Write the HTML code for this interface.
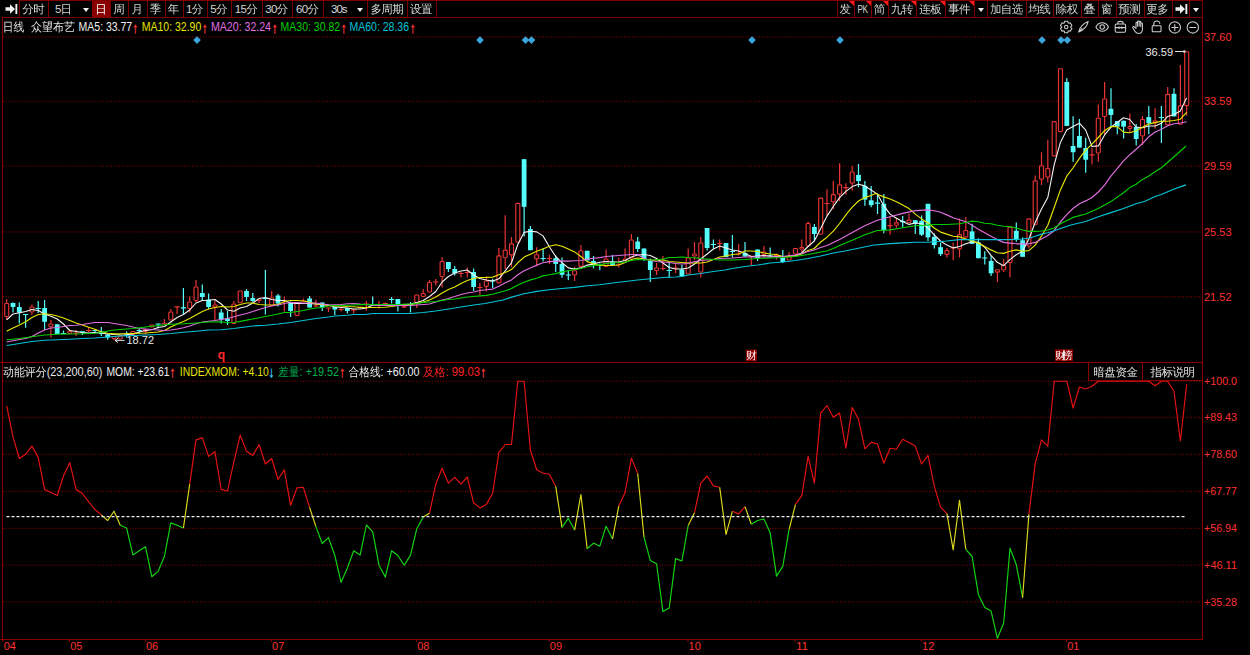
<!DOCTYPE html>
<html lang="zh-CN"><head><meta charset="utf-8"><title>众望布艺 日线</title>
<style>
html,body{margin:0;padding:0;background:#000;}
body{width:1250px;height:655px;overflow:hidden;position:relative;font-family:"Liberation Sans","WenQuanYi Zen Hei","Noto Sans CJK SC",sans-serif;font-size:12px;color:#e6e6e6;}
#tb{position:absolute;left:0;top:0;width:1250px;height:18px;}
.b{position:absolute;top:0;height:18px;line-height:16.6px;box-sizing:border-box;border:1px solid #800000;text-align:center;white-space:nowrap;color:#d6d6d6;overflow:hidden;font-size:11.5px;letter-spacing:-0.6px;padding-right:1.5px}
.b.nb{border-color:transparent}
.b.act{background:#8a0000;color:#fff}
.dd{position:absolute;top:7px;width:0;height:0;border-left:3.5px solid transparent;border-right:3.5px solid transparent;border-top:4px solid #f0f0f0}
.tri{position:absolute;right:0;top:0;width:0;height:0;border-top:5px solid #ff1a1a;border-left:5px solid transparent}
#chart{position:absolute;left:0;top:0}
#chart text{font-family:"Liberation Sans","WenQuanYi Zen Hei","Noto Sans CJK SC",sans-serif;}
.sb{position:absolute;top:362px;height:19px;line-height:19px;box-sizing:border-box;border:1px solid #8c0000;text-align:center;color:#e6e6e6;background:#000;font-size:11.5px;letter-spacing:-0.5px}
</style></head><body>
<svg id="chart" width="1250" height="655" viewBox="0 0 1250 655">
<g shape-rendering="crispEdges">
<rect x="1.8" y="17" width="1.5" height="622" fill="#8c0000"/>
<rect x="1201.8" y="0" width="1.5" height="640" fill="#8c0000"/>
<rect x="2" y="17" width="1200" height="1" fill="#8c0000"/>
<rect x="0" y="362" width="1203" height="1" fill="#8c0000"/>
<rect x="0" y="638.5" width="1203" height="1.2" fill="#8c0000"/>
</g>
<line x1="3" x2="1202" y1="37" y2="37" stroke="#980000" stroke-width="1" stroke-dasharray="1 1.7"/>
<line x1="3" x2="1202" y1="101.3" y2="101.3" stroke="#980000" stroke-width="1" stroke-dasharray="1 1.7"/>
<line x1="3" x2="1202" y1="166.1" y2="166.1" stroke="#980000" stroke-width="1" stroke-dasharray="1 1.7"/>
<line x1="3" x2="1202" y1="231.9" y2="231.9" stroke="#980000" stroke-width="1" stroke-dasharray="1 1.7"/>
<line x1="3" x2="1202" y1="296.9" y2="296.9" stroke="#980000" stroke-width="1" stroke-dasharray="1 1.7"/>
<line x1="3" x2="1202" y1="381.2" y2="381.2" stroke="#980000" stroke-width="1" stroke-dasharray="1 1.7"/>
<line x1="3" x2="1202" y1="417.3" y2="417.3" stroke="#980000" stroke-width="1" stroke-dasharray="1 1.7"/>
<line x1="3" x2="1202" y1="454.3" y2="454.3" stroke="#980000" stroke-width="1" stroke-dasharray="1 1.7"/>
<line x1="3" x2="1202" y1="491.4" y2="491.4" stroke="#980000" stroke-width="1" stroke-dasharray="1 1.7"/>
<line x1="3" x2="1202" y1="528.3" y2="528.3" stroke="#980000" stroke-width="1" stroke-dasharray="1 1.7"/>
<line x1="3" x2="1202" y1="565.2" y2="565.2" stroke="#980000" stroke-width="1" stroke-dasharray="1 1.7"/>
<line x1="3" x2="1202" y1="601.9" y2="601.9" stroke="#980000" stroke-width="1" stroke-dasharray="1 1.7"/>
<g id="candles">
<rect x="4.7" y="303.5" width="4.0" height="13.0" rx="0.9" stroke="#e83434" stroke-width="1.15" fill="#000"/>
<path d="M6.7 299.2V303.0M6.7 317.0V320.0" stroke="#e83434" stroke-width="1.2" fill="none"/>
<path d="M13.0 302.5V312.5" stroke="#54fcfc" stroke-width="1.2" fill="none"/>
<rect x="10.6" y="303.0" width="4.8" height="4.0" fill="#54fcfc"/>
<path d="M19.3 302.5V323.5" stroke="#54fcfc" stroke-width="1.2" fill="none"/>
<rect x="16.9" y="307.0" width="4.8" height="5.5" fill="#54fcfc"/>
<path d="M25.6 314.0V327.8M23.0 314.5H28.2" stroke="#54fcfc" stroke-width="1.2" fill="none"/>
<rect x="29.9" y="307.0" width="4.0" height="5.0" rx="0.9" stroke="#e83434" stroke-width="1.15" fill="#000"/>
<path d="M31.9 304.5V306.5M31.9 312.5V315.0" stroke="#e83434" stroke-width="1.2" fill="none"/>
<path d="M38.2 301.0V313.0M35.6 308.5H40.9" stroke="#54fcfc" stroke-width="1.2" fill="none"/>
<path d="M44.6 300.0V330.0" stroke="#54fcfc" stroke-width="1.2" fill="none"/>
<rect x="42.2" y="308.0" width="4.8" height="13.8" fill="#54fcfc"/>
<rect x="48.9" y="324.0" width="4.0" height="2.7" rx="0.9" stroke="#e83434" stroke-width="1.15" fill="#000"/>
<path d="M50.9 320.0V323.5M50.9 327.2V337.8" stroke="#e83434" stroke-width="1.2" fill="none"/>
<path d="M57.2 324.3V334.0" stroke="#54fcfc" stroke-width="1.2" fill="none"/>
<rect x="54.8" y="324.3" width="4.8" height="9.7" fill="#54fcfc"/>
<path d="M63.5 330.5V334.0M60.9 333.5H66.1" stroke="#54fcfc" stroke-width="1.2" fill="none"/>
<rect x="67.8" y="331.5" width="4.0" height="2.0" rx="0.9" stroke="#e83434" stroke-width="1.15" fill="#000"/>
<path d="M69.8 330.5V331.0" stroke="#e83434" stroke-width="1.2" fill="none"/>
<path d="M76.1 330.0V336.0M73.5 333.2H78.7" stroke="#e83434" stroke-width="1.2" fill="none"/>
<path d="M82.4 331.5V335.0M79.8 331.9H85.0" stroke="#54fcfc" stroke-width="1.2" fill="none"/>
<path d="M88.7 327.0V332.0M86.1 330.5H91.3" stroke="#e83434" stroke-width="1.2" fill="none"/>
<path d="M95.0 329.0V332.0M92.4 330.5H97.6" stroke="#54fcfc" stroke-width="1.2" fill="none"/>
<path d="M101.3 327.0V336.0" stroke="#54fcfc" stroke-width="1.2" fill="none"/>
<rect x="98.9" y="331.5" width="4.8" height="2.5" fill="#54fcfc"/>
<path d="M107.7 334.0V339.8" stroke="#54fcfc" stroke-width="1.2" fill="none"/>
<rect x="105.3" y="334.5" width="4.8" height="3.0" fill="#54fcfc"/>
<rect x="112.0" y="336.5" width="4.0" height="2.0" rx="0.9" stroke="#e83434" stroke-width="1.15" fill="#000"/>
<path d="M114.0 339.0V340.5" stroke="#e83434" stroke-width="1.2" fill="none"/>
<rect x="118.3" y="336.0" width="4.0" height="3.0" rx="0.9" stroke="#e83434" stroke-width="1.15" fill="#000"/>
<path d="M126.6 331.5V337.5M124.0 335.0H129.2" stroke="#54fcfc" stroke-width="1.2" fill="none"/>
<rect x="130.9" y="331.5" width="4.0" height="3.0" rx="0.9" stroke="#e83434" stroke-width="1.15" fill="#000"/>
<path d="M139.2 329.0V333.0M136.6 330.5H141.8" stroke="#54fcfc" stroke-width="1.2" fill="none"/>
<rect x="143.5" y="329.5" width="4.0" height="2.0" rx="0.9" stroke="#e83434" stroke-width="1.15" fill="#000"/>
<path d="M145.5 332.0V334.5" stroke="#e83434" stroke-width="1.2" fill="none"/>
<rect x="149.8" y="325.0" width="4.0" height="2.0" rx="0.9" stroke="#e83434" stroke-width="1.15" fill="#000"/>
<path d="M158.1 323.5V328.5M155.5 324.0H160.7" stroke="#54fcfc" stroke-width="1.2" fill="none"/>
<path d="M164.4 319.0V324.5M161.8 323.8H167.0" stroke="#e83434" stroke-width="1.2" fill="none"/>
<rect x="168.8" y="312.0" width="4.0" height="8.0" rx="0.9" stroke="#e83434" stroke-width="1.15" fill="#000"/>
<path d="M170.8 309.0V311.5" stroke="#e83434" stroke-width="1.2" fill="none"/>
<path d="M177.1 306.0V314.0M174.5 306.8H179.7" stroke="#e83434" stroke-width="1.2" fill="none"/>
<path d="M183.4 288.0V314.0M180.8 307.8H186.0" stroke="#54fcfc" stroke-width="1.2" fill="none"/>
<rect x="187.7" y="302.0" width="4.0" height="6.5" rx="0.9" stroke="#e83434" stroke-width="1.15" fill="#000"/>
<path d="M189.7 296.2V301.5M189.7 309.0V312.5" stroke="#e83434" stroke-width="1.2" fill="none"/>
<rect x="194.0" y="287.0" width="4.0" height="13.5" rx="0.9" stroke="#e83434" stroke-width="1.15" fill="#000"/>
<path d="M196.0 280.0V286.5M196.0 301.0V302.0" stroke="#e83434" stroke-width="1.2" fill="none"/>
<path d="M202.3 284.5V300.5" stroke="#54fcfc" stroke-width="1.2" fill="none"/>
<rect x="199.9" y="293.0" width="4.8" height="4.0" fill="#54fcfc"/>
<path d="M208.6 293.5V309.0" stroke="#54fcfc" stroke-width="1.2" fill="none"/>
<rect x="206.2" y="299.5" width="4.8" height="7.5" fill="#54fcfc"/>
<rect x="212.9" y="305.0" width="4.0" height="2.0" rx="0.9" stroke="#e83434" stroke-width="1.15" fill="#000"/>
<path d="M214.9 300.5V304.5M214.9 307.5V320.5" stroke="#e83434" stroke-width="1.2" fill="none"/>
<path d="M221.2 309.0V323.5" stroke="#54fcfc" stroke-width="1.2" fill="none"/>
<rect x="218.8" y="312.5" width="4.8" height="7.0" fill="#54fcfc"/>
<path d="M227.5 311.0V325.0" stroke="#54fcfc" stroke-width="1.2" fill="none"/>
<rect x="225.1" y="318.5" width="4.8" height="2.5" fill="#54fcfc"/>
<rect x="231.9" y="304.0" width="4.0" height="19.5" rx="0.9" stroke="#e83434" stroke-width="1.15" fill="#000"/>
<path d="M233.9 301.0V303.5" stroke="#e83434" stroke-width="1.2" fill="none"/>
<rect x="238.2" y="291.0" width="4.0" height="11.7" rx="0.9" stroke="#e83434" stroke-width="1.15" fill="#000"/>
<path d="M246.5 289.0V301.0" stroke="#54fcfc" stroke-width="1.2" fill="none"/>
<rect x="244.1" y="291.0" width="4.8" height="6.0" fill="#54fcfc"/>
<path d="M252.8 293.0V302.0" stroke="#54fcfc" stroke-width="1.2" fill="none"/>
<rect x="250.4" y="298.0" width="4.8" height="3.0" fill="#54fcfc"/>
<path d="M259.1 299.5V303.0M256.5 300.2H261.7" stroke="#e83434" stroke-width="1.2" fill="none"/>
<path d="M265.4 270.0V314.5M262.8 298.5H268.0" stroke="#54fcfc" stroke-width="1.2" fill="none"/>
<rect x="269.7" y="298.0" width="4.0" height="7.5" rx="0.9" stroke="#e83434" stroke-width="1.15" fill="#000"/>
<path d="M271.7 291.0V297.5" stroke="#e83434" stroke-width="1.2" fill="none"/>
<path d="M278.0 294.0V306.5" stroke="#54fcfc" stroke-width="1.2" fill="none"/>
<rect x="275.6" y="295.5" width="4.8" height="8.0" fill="#54fcfc"/>
<path d="M284.3 296.5V311.5M281.7 300.5H286.9" stroke="#e83434" stroke-width="1.2" fill="none"/>
<path d="M290.6 301.5V317.0" stroke="#54fcfc" stroke-width="1.2" fill="none"/>
<rect x="288.2" y="302.5" width="4.8" height="8.5" fill="#54fcfc"/>
<rect x="295.0" y="302.5" width="4.0" height="13.0" rx="0.9" stroke="#e83434" stroke-width="1.15" fill="#000"/>
<path d="M303.3 298.5V301.5M300.7 301.0H305.9" stroke="#e83434" stroke-width="1.2" fill="none"/>
<path d="M309.6 296.0V307.5" stroke="#54fcfc" stroke-width="1.2" fill="none"/>
<rect x="307.2" y="298.5" width="4.8" height="9.0" fill="#54fcfc"/>
<path d="M315.9 299.5V307.0M313.3 306.0H318.5" stroke="#e83434" stroke-width="1.2" fill="none"/>
<path d="M322.2 302.5V311.0" stroke="#54fcfc" stroke-width="1.2" fill="none"/>
<rect x="319.8" y="302.5" width="4.8" height="5.0" fill="#54fcfc"/>
<path d="M328.5 307.5V312.0M325.9 308.0H331.1" stroke="#e83434" stroke-width="1.2" fill="none"/>
<path d="M334.8 307.0V315.0" stroke="#54fcfc" stroke-width="1.2" fill="none"/>
<rect x="332.4" y="307.0" width="4.8" height="2.5" fill="#54fcfc"/>
<path d="M341.1 307.5V311.5M338.5 309.5H343.7" stroke="#e83434" stroke-width="1.2" fill="none"/>
<path d="M347.4 308.0V313.5" stroke="#54fcfc" stroke-width="1.2" fill="none"/>
<rect x="345.0" y="308.0" width="4.8" height="3.0" fill="#54fcfc"/>
<path d="M353.7 309.0V313.5M351.1 309.8H356.3" stroke="#e83434" stroke-width="1.2" fill="none"/>
<path d="M360.1 306.5V308.0M357.5 307.2H362.7" stroke="#e83434" stroke-width="1.2" fill="none"/>
<path d="M366.4 301.0V310.5M363.8 304.0H369.0" stroke="#e83434" stroke-width="1.2" fill="none"/>
<path d="M372.7 296.5V306.0M370.1 304.5H375.3" stroke="#54fcfc" stroke-width="1.2" fill="none"/>
<path d="M379.0 301.0V308.5M376.4 305.0H381.6" stroke="#e83434" stroke-width="1.2" fill="none"/>
<path d="M385.3 302.5V304.5M382.7 303.5H387.9" stroke="#e83434" stroke-width="1.2" fill="none"/>
<path d="M391.6 297.0V303.5M389.0 299.5H394.2" stroke="#54fcfc" stroke-width="1.2" fill="none"/>
<path d="M397.9 299.0V311.5" stroke="#54fcfc" stroke-width="1.2" fill="none"/>
<rect x="395.5" y="299.0" width="4.8" height="6.5" fill="#54fcfc"/>
<path d="M404.2 303.5V308.0M401.6 306.8H406.8" stroke="#e83434" stroke-width="1.2" fill="none"/>
<path d="M410.5 302.0V312.5M407.9 304.5H413.1" stroke="#54fcfc" stroke-width="1.2" fill="none"/>
<rect x="414.8" y="295.0" width="4.0" height="7.5" rx="0.9" stroke="#e83434" stroke-width="1.15" fill="#000"/>
<path d="M416.8 303.0V308.0" stroke="#e83434" stroke-width="1.2" fill="none"/>
<rect x="421.2" y="293.5" width="4.0" height="3.0" rx="0.9" stroke="#e83434" stroke-width="1.15" fill="#000"/>
<path d="M423.2 289.0V293.0" stroke="#e83434" stroke-width="1.2" fill="none"/>
<rect x="427.5" y="282.5" width="4.0" height="9.5" rx="0.9" stroke="#e83434" stroke-width="1.15" fill="#000"/>
<path d="M429.5 280.0V282.0" stroke="#e83434" stroke-width="1.2" fill="none"/>
<path d="M435.8 279.0V285.5M433.2 282.0H438.4" stroke="#e83434" stroke-width="1.2" fill="none"/>
<rect x="440.1" y="261.5" width="4.0" height="15.0" rx="0.9" stroke="#e83434" stroke-width="1.15" fill="#000"/>
<path d="M442.1 257.0V261.0M442.1 277.0V287.5" stroke="#e83434" stroke-width="1.2" fill="none"/>
<path d="M448.4 262.0V272.0" stroke="#54fcfc" stroke-width="1.2" fill="none"/>
<rect x="446.0" y="262.0" width="4.8" height="7.0" fill="#54fcfc"/>
<path d="M454.7 266.0V275.5" stroke="#54fcfc" stroke-width="1.2" fill="none"/>
<rect x="452.3" y="269.0" width="4.8" height="4.5" fill="#54fcfc"/>
<path d="M461.0 272.0V277.5M458.4 273.5H463.6" stroke="#e83434" stroke-width="1.2" fill="none"/>
<path d="M467.3 267.5V277.5M464.7 272.5H469.9" stroke="#e83434" stroke-width="1.2" fill="none"/>
<path d="M473.6 268.5V291.0" stroke="#54fcfc" stroke-width="1.2" fill="none"/>
<rect x="471.2" y="272.0" width="4.8" height="15.0" fill="#54fcfc"/>
<path d="M479.9 283.0V295.0M477.3 287.5H482.5" stroke="#e83434" stroke-width="1.2" fill="none"/>
<rect x="484.3" y="281.0" width="4.0" height="5.3" rx="0.9" stroke="#e83434" stroke-width="1.15" fill="#000"/>
<path d="M486.3 276.5V280.5M486.3 286.8V291.4" stroke="#e83434" stroke-width="1.2" fill="none"/>
<path d="M492.6 278.8V288.0M490.0 281.0H495.2" stroke="#54fcfc" stroke-width="1.2" fill="none"/>
<rect x="496.9" y="255.8" width="4.0" height="27.1" rx="0.9" stroke="#e83434" stroke-width="1.15" fill="#000"/>
<path d="M498.9 247.9V255.3" stroke="#e83434" stroke-width="1.2" fill="none"/>
<rect x="503.2" y="250.1" width="4.0" height="7.6" rx="0.9" stroke="#e83434" stroke-width="1.15" fill="#000"/>
<path d="M505.2 215.3V249.6M505.2 258.2V269.0" stroke="#e83434" stroke-width="1.2" fill="none"/>
<rect x="509.5" y="243.8" width="4.0" height="11.0" rx="0.9" stroke="#e83434" stroke-width="1.15" fill="#000"/>
<path d="M511.5 237.0V243.3M511.5 255.3V266.8" stroke="#e83434" stroke-width="1.2" fill="none"/>
<rect x="515.8" y="203.3" width="4.0" height="38.9" rx="0.9" stroke="#e83434" stroke-width="1.15" fill="#000"/>
<path d="M524.1 159.2V236.4" stroke="#54fcfc" stroke-width="1.2" fill="none"/>
<rect x="521.7" y="159.2" width="4.8" height="47.6" fill="#54fcfc"/>
<path d="M530.4 226.1V250.2" stroke="#54fcfc" stroke-width="1.2" fill="none"/>
<rect x="528.0" y="229.0" width="4.8" height="21.2" fill="#54fcfc"/>
<rect x="534.7" y="254.7" width="4.0" height="4.1" rx="0.9" stroke="#e83434" stroke-width="1.15" fill="#000"/>
<path d="M536.7 247.3V254.2M536.7 259.3V266.2" stroke="#e83434" stroke-width="1.2" fill="none"/>
<path d="M543.1 247.9V261.6M540.5 258.5H545.7" stroke="#54fcfc" stroke-width="1.2" fill="none"/>
<path d="M549.4 254.8V263.9M546.8 258.5H552.0" stroke="#e83434" stroke-width="1.2" fill="none"/>
<path d="M555.7 255.3V271.9" stroke="#54fcfc" stroke-width="1.2" fill="none"/>
<rect x="553.3" y="258.2" width="4.8" height="5.7" fill="#54fcfc"/>
<path d="M562.0 257.6V277.7" stroke="#54fcfc" stroke-width="1.2" fill="none"/>
<rect x="559.6" y="263.9" width="4.8" height="10.9" fill="#54fcfc"/>
<path d="M568.3 270.2V279.9M565.7 275.0H570.9" stroke="#54fcfc" stroke-width="1.2" fill="none"/>
<rect x="572.6" y="270.7" width="4.0" height="4.2" rx="0.9" stroke="#e83434" stroke-width="1.15" fill="#000"/>
<path d="M574.6 266.8V270.2M574.6 275.4V281.1" stroke="#e83434" stroke-width="1.2" fill="none"/>
<rect x="578.9" y="250.7" width="4.0" height="15.6" rx="0.9" stroke="#e83434" stroke-width="1.15" fill="#000"/>
<path d="M580.9 245.0V250.2" stroke="#e83434" stroke-width="1.2" fill="none"/>
<path d="M587.2 250.8V260.5" stroke="#54fcfc" stroke-width="1.2" fill="none"/>
<rect x="584.8" y="250.8" width="4.8" height="9.7" fill="#54fcfc"/>
<path d="M593.5 255.9V268.5" stroke="#54fcfc" stroke-width="1.2" fill="none"/>
<rect x="591.1" y="261.0" width="4.8" height="4.0" fill="#54fcfc"/>
<path d="M599.8 263.4V270.2M597.2 265.0H602.4" stroke="#54fcfc" stroke-width="1.2" fill="none"/>
<rect x="604.1" y="259.0" width="4.0" height="7.5" rx="0.9" stroke="#e83434" stroke-width="1.15" fill="#000"/>
<path d="M606.1 249.5V258.5" stroke="#e83434" stroke-width="1.2" fill="none"/>
<path d="M612.5 255.0V265.0" stroke="#54fcfc" stroke-width="1.2" fill="none"/>
<rect x="610.1" y="261.5" width="4.8" height="3.5" fill="#54fcfc"/>
<path d="M618.8 257.5V267.5M616.2 264.5H621.4" stroke="#e83434" stroke-width="1.2" fill="none"/>
<rect x="623.1" y="259.0" width="4.0" height="1.5" rx="0.9" stroke="#e83434" stroke-width="1.15" fill="#000"/>
<path d="M625.1 248.5V258.5" stroke="#e83434" stroke-width="1.2" fill="none"/>
<rect x="629.4" y="240.0" width="4.0" height="18.0" rx="0.9" stroke="#e83434" stroke-width="1.15" fill="#000"/>
<path d="M631.4 234.0V239.5" stroke="#e83434" stroke-width="1.2" fill="none"/>
<path d="M637.7 237.0V252.0" stroke="#54fcfc" stroke-width="1.2" fill="none"/>
<rect x="635.3" y="241.5" width="4.8" height="7.5" fill="#54fcfc"/>
<path d="M644.0 248.5V261.0" stroke="#54fcfc" stroke-width="1.2" fill="none"/>
<rect x="641.6" y="248.5" width="4.8" height="10.5" fill="#54fcfc"/>
<path d="M650.3 258.5V282.0" stroke="#54fcfc" stroke-width="1.2" fill="none"/>
<rect x="647.9" y="260.5" width="4.8" height="9.5" fill="#54fcfc"/>
<rect x="654.6" y="268.0" width="4.0" height="2.5" rx="0.9" stroke="#e83434" stroke-width="1.15" fill="#000"/>
<path d="M656.6 263.0V267.5M656.6 271.0V275.0" stroke="#e83434" stroke-width="1.2" fill="none"/>
<path d="M662.9 256.0V270.5M660.3 268.5H665.5" stroke="#e83434" stroke-width="1.2" fill="none"/>
<path d="M669.2 262.5V278.0M666.6 270.5H671.9" stroke="#54fcfc" stroke-width="1.2" fill="none"/>
<path d="M675.6 263.5V273.0M673.0 268.0H678.2" stroke="#e83434" stroke-width="1.2" fill="none"/>
<path d="M681.9 265.0V276.5" stroke="#54fcfc" stroke-width="1.2" fill="none"/>
<rect x="679.5" y="269.5" width="4.8" height="7.0" fill="#54fcfc"/>
<rect x="686.2" y="258.0" width="4.0" height="16.0" rx="0.9" stroke="#e83434" stroke-width="1.15" fill="#000"/>
<path d="M688.2 248.5V257.5" stroke="#e83434" stroke-width="1.2" fill="none"/>
<rect x="692.5" y="254.0" width="4.0" height="2.0" rx="0.9" stroke="#e83434" stroke-width="1.15" fill="#000"/>
<path d="M694.5 242.0V253.5M694.5 256.5V260.0" stroke="#e83434" stroke-width="1.2" fill="none"/>
<rect x="698.8" y="243.0" width="4.0" height="29.0" rx="0.9" stroke="#e83434" stroke-width="1.15" fill="#000"/>
<path d="M700.8 237.0V242.5M700.8 272.5V277.5" stroke="#e83434" stroke-width="1.2" fill="none"/>
<path d="M707.1 228.0V250.5" stroke="#54fcfc" stroke-width="1.2" fill="none"/>
<rect x="704.7" y="228.0" width="4.8" height="20.0" fill="#54fcfc"/>
<path d="M713.4 239.5V248.5M710.8 244.5H716.0" stroke="#54fcfc" stroke-width="1.2" fill="none"/>
<path d="M719.7 239.5V250.5M717.1 243.5H722.3" stroke="#e83434" stroke-width="1.2" fill="none"/>
<path d="M726.0 243.0V257.0" stroke="#54fcfc" stroke-width="1.2" fill="none"/>
<rect x="723.6" y="243.0" width="4.8" height="14.0" fill="#54fcfc"/>
<path d="M732.4 235.0V257.5M729.8 251.5H735.0" stroke="#54fcfc" stroke-width="1.2" fill="none"/>
<path d="M738.7 244.0V255.5M736.1 254.0H741.3" stroke="#e83434" stroke-width="1.2" fill="none"/>
<path d="M745.0 242.0V256.5" stroke="#54fcfc" stroke-width="1.2" fill="none"/>
<rect x="742.6" y="253.0" width="4.8" height="3.5" fill="#54fcfc"/>
<path d="M751.3 255.5V265.5M748.7 256.5H753.9" stroke="#e83434" stroke-width="1.2" fill="none"/>
<path d="M757.6 249.5V261.0" stroke="#54fcfc" stroke-width="1.2" fill="none"/>
<rect x="755.2" y="249.5" width="4.8" height="8.5" fill="#54fcfc"/>
<rect x="761.9" y="252.0" width="4.0" height="2.5" rx="0.9" stroke="#e83434" stroke-width="1.15" fill="#000"/>
<path d="M763.9 246.0V251.5M763.9 255.0V257.0" stroke="#e83434" stroke-width="1.2" fill="none"/>
<path d="M770.2 247.5V257.5M767.6 256.0H772.8" stroke="#54fcfc" stroke-width="1.2" fill="none"/>
<path d="M776.5 253.5V259.5M773.9 255.5H779.1" stroke="#e83434" stroke-width="1.2" fill="none"/>
<path d="M782.8 250.0V263.0" stroke="#54fcfc" stroke-width="1.2" fill="none"/>
<rect x="780.4" y="258.0" width="4.8" height="4.0" fill="#54fcfc"/>
<rect x="787.1" y="256.0" width="4.0" height="4.0" rx="0.9" stroke="#e83434" stroke-width="1.15" fill="#000"/>
<path d="M789.1 252.0V255.5" stroke="#e83434" stroke-width="1.2" fill="none"/>
<rect x="793.5" y="248.5" width="4.0" height="5.5" rx="0.9" stroke="#e83434" stroke-width="1.15" fill="#000"/>
<rect x="799.8" y="247.5" width="4.0" height="1.5" rx="0.9" stroke="#e83434" stroke-width="1.15" fill="#000"/>
<path d="M801.8 239.5V247.0M801.8 249.5V252.0" stroke="#e83434" stroke-width="1.2" fill="none"/>
<rect x="806.1" y="223.5" width="4.0" height="22.5" rx="0.9" stroke="#e83434" stroke-width="1.15" fill="#000"/>
<path d="M808.1 221.5V223.0" stroke="#e83434" stroke-width="1.2" fill="none"/>
<path d="M814.4 224.0V240.5" stroke="#54fcfc" stroke-width="1.2" fill="none"/>
<rect x="812.0" y="227.0" width="4.8" height="7.0" fill="#54fcfc"/>
<rect x="818.7" y="198.1" width="4.0" height="36.1" rx="0.9" stroke="#e83434" stroke-width="1.15" fill="#000"/>
<path d="M827.0 189.3V215.4M824.4 203.5H829.6" stroke="#e83434" stroke-width="1.2" fill="none"/>
<rect x="831.3" y="194.6" width="4.0" height="7.3" rx="0.9" stroke="#e83434" stroke-width="1.15" fill="#000"/>
<path d="M833.3 181.1V194.1M833.3 202.4V209.3" stroke="#e83434" stroke-width="1.2" fill="none"/>
<rect x="837.6" y="184.8" width="4.0" height="9.3" rx="0.9" stroke="#e83434" stroke-width="1.15" fill="#000"/>
<path d="M839.6 163.2V184.3M839.6 194.6V201.0" stroke="#e83434" stroke-width="1.2" fill="none"/>
<path d="M845.9 183.2V194.8M843.3 187.7H848.5" stroke="#e83434" stroke-width="1.2" fill="none"/>
<rect x="850.2" y="172.0" width="4.0" height="11.1" rx="0.9" stroke="#e83434" stroke-width="1.15" fill="#000"/>
<path d="M852.2 166.0V171.5M852.2 183.6V190.7" stroke="#e83434" stroke-width="1.2" fill="none"/>
<path d="M858.5 163.9V187.3" stroke="#54fcfc" stroke-width="1.2" fill="none"/>
<rect x="856.1" y="174.9" width="4.8" height="6.2" fill="#54fcfc"/>
<path d="M864.9 181.1V205.8" stroke="#54fcfc" stroke-width="1.2" fill="none"/>
<rect x="862.5" y="185.9" width="4.8" height="13.7" fill="#54fcfc"/>
<path d="M871.2 185.9V207.2" stroke="#54fcfc" stroke-width="1.2" fill="none"/>
<rect x="868.8" y="200.3" width="4.8" height="4.8" fill="#54fcfc"/>
<path d="M877.5 193.5V214.1M874.9 203.1H880.1" stroke="#54fcfc" stroke-width="1.2" fill="none"/>
<path d="M883.8 194.1V233.3" stroke="#54fcfc" stroke-width="1.2" fill="none"/>
<rect x="881.4" y="203.8" width="4.8" height="26.7" fill="#54fcfc"/>
<path d="M890.1 216.8V234.7M887.5 225.7H892.7" stroke="#e83434" stroke-width="1.2" fill="none"/>
<rect x="894.4" y="222.8" width="4.0" height="2.4" rx="0.9" stroke="#e83434" stroke-width="1.15" fill="#000"/>
<path d="M896.4 217.5V222.3M896.4 225.7V227.8" stroke="#e83434" stroke-width="1.2" fill="none"/>
<path d="M902.7 216.1V227.8M900.1 221.6H905.3" stroke="#54fcfc" stroke-width="1.2" fill="none"/>
<rect x="907.0" y="220.1" width="4.0" height="2.4" rx="0.9" stroke="#e83434" stroke-width="1.15" fill="#000"/>
<path d="M909.0 213.4V219.6" stroke="#e83434" stroke-width="1.2" fill="none"/>
<path d="M915.3 220.2V234.0" stroke="#54fcfc" stroke-width="1.2" fill="none"/>
<rect x="912.9" y="220.2" width="4.8" height="3.5" fill="#54fcfc"/>
<path d="M921.6 215.4V236.0" stroke="#54fcfc" stroke-width="1.2" fill="none"/>
<rect x="919.2" y="220.9" width="4.8" height="13.8" fill="#54fcfc"/>
<path d="M928.0 203.8V240.9" stroke="#54fcfc" stroke-width="1.2" fill="none"/>
<rect x="925.6" y="203.8" width="4.8" height="33.6" fill="#54fcfc"/>
<path d="M934.3 233.5V248.6" stroke="#54fcfc" stroke-width="1.2" fill="none"/>
<rect x="931.9" y="236.9" width="4.8" height="8.2" fill="#54fcfc"/>
<path d="M940.6 242.4V256.1" stroke="#54fcfc" stroke-width="1.2" fill="none"/>
<rect x="938.2" y="247.2" width="4.8" height="6.9" fill="#54fcfc"/>
<rect x="944.9" y="250.5" width="4.0" height="3.8" rx="0.9" stroke="#e83434" stroke-width="1.15" fill="#000"/>
<path d="M946.9 247.9V250.0M946.9 254.8V257.5" stroke="#e83434" stroke-width="1.2" fill="none"/>
<path d="M953.2 242.4V260.2M950.6 248.0H955.8" stroke="#e83434" stroke-width="1.2" fill="none"/>
<rect x="957.5" y="234.6" width="4.0" height="14.2" rx="0.9" stroke="#e83434" stroke-width="1.15" fill="#000"/>
<path d="M959.5 218.4V234.1M959.5 249.3V257.5" stroke="#e83434" stroke-width="1.2" fill="none"/>
<rect x="963.8" y="230.5" width="4.0" height="6.6" rx="0.9" stroke="#e83434" stroke-width="1.15" fill="#000"/>
<path d="M965.8 217.0V230.0" stroke="#e83434" stroke-width="1.2" fill="none"/>
<path d="M972.1 223.8V243.8" stroke="#54fcfc" stroke-width="1.2" fill="none"/>
<rect x="969.7" y="231.4" width="4.8" height="12.4" fill="#54fcfc"/>
<path d="M978.4 238.3V258.2" stroke="#54fcfc" stroke-width="1.2" fill="none"/>
<rect x="976.0" y="242.4" width="4.8" height="15.8" fill="#54fcfc"/>
<path d="M984.8 251.3V264.4M982.1 258.0H987.4" stroke="#54fcfc" stroke-width="1.2" fill="none"/>
<path d="M991.1 256.1V276.0" stroke="#54fcfc" stroke-width="1.2" fill="none"/>
<rect x="988.7" y="260.9" width="4.8" height="12.4" fill="#54fcfc"/>
<rect x="995.4" y="269.7" width="4.0" height="2.4" rx="0.9" stroke="#e83434" stroke-width="1.15" fill="#000"/>
<path d="M997.4 272.6V282.2" stroke="#e83434" stroke-width="1.2" fill="none"/>
<rect x="1001.7" y="265.5" width="4.0" height="4.5" rx="0.9" stroke="#e83434" stroke-width="1.15" fill="#000"/>
<path d="M1003.7 258.9V265.0M1003.7 270.5V271.9" stroke="#e83434" stroke-width="1.2" fill="none"/>
<rect x="1008.0" y="227.1" width="4.0" height="35.4" rx="0.9" stroke="#e83434" stroke-width="1.15" fill="#000"/>
<path d="M1010.0 263.0V277.4" stroke="#e83434" stroke-width="1.2" fill="none"/>
<path d="M1016.3 222.5V241.7" stroke="#54fcfc" stroke-width="1.2" fill="none"/>
<rect x="1013.9" y="230.7" width="4.8" height="8.9" fill="#54fcfc"/>
<path d="M1022.6 237.6V256.8" stroke="#54fcfc" stroke-width="1.2" fill="none"/>
<rect x="1020.2" y="240.3" width="4.8" height="16.5" fill="#54fcfc"/>
<rect x="1026.9" y="218.8" width="4.0" height="27.2" rx="0.9" stroke="#e83434" stroke-width="1.15" fill="#000"/>
<path d="M1028.9 246.5V248.6" stroke="#e83434" stroke-width="1.2" fill="none"/>
<rect x="1033.2" y="180.8" width="4.0" height="43.9" rx="0.9" stroke="#e83434" stroke-width="1.15" fill="#000"/>
<path d="M1035.2 175.5V180.3" stroke="#e83434" stroke-width="1.2" fill="none"/>
<rect x="1039.5" y="165.7" width="4.0" height="13.4" rx="0.9" stroke="#e83434" stroke-width="1.15" fill="#000"/>
<path d="M1041.5 152.2V165.2M1041.5 179.6V185.1" stroke="#e83434" stroke-width="1.2" fill="none"/>
<rect x="1045.8" y="168.5" width="4.0" height="8.6" rx="0.9" stroke="#e83434" stroke-width="1.15" fill="#000"/>
<path d="M1047.8 139.8V168.0M1047.8 177.6V182.4" stroke="#e83434" stroke-width="1.2" fill="none"/>
<rect x="1052.2" y="121.6" width="4.0" height="34.2" rx="0.9" stroke="#e83434" stroke-width="1.15" fill="#000"/>
<rect x="1058.5" y="68.7" width="4.0" height="62.9" rx="0.9" stroke="#e83434" stroke-width="1.15" fill="#000"/>
<path d="M1066.8 77.9V125.9" stroke="#54fcfc" stroke-width="1.2" fill="none"/>
<rect x="1064.4" y="82.0" width="4.8" height="43.9" fill="#54fcfc"/>
<path d="M1073.1 116.3V161.8" stroke="#54fcfc" stroke-width="1.2" fill="none"/>
<rect x="1070.7" y="146.0" width="4.8" height="6.2" fill="#54fcfc"/>
<path d="M1079.4 119.1V147.6" stroke="#54fcfc" stroke-width="1.2" fill="none"/>
<rect x="1077.0" y="136.0" width="4.8" height="11.6" fill="#54fcfc"/>
<path d="M1085.7 137.7V172.8" stroke="#54fcfc" stroke-width="1.2" fill="none"/>
<rect x="1083.3" y="148.0" width="4.8" height="11.7" fill="#54fcfc"/>
<path d="M1092.0 148.0V164.5M1089.4 154.9H1094.6" stroke="#e83434" stroke-width="1.2" fill="none"/>
<rect x="1096.3" y="118.2" width="4.0" height="34.8" rx="0.9" stroke="#e83434" stroke-width="1.15" fill="#000"/>
<path d="M1098.3 104.6V117.7M1098.3 153.5V161.8" stroke="#e83434" stroke-width="1.2" fill="none"/>
<rect x="1102.6" y="99.0" width="4.0" height="17.5" rx="0.9" stroke="#e83434" stroke-width="1.15" fill="#000"/>
<path d="M1104.6 82.0V98.5M1104.6 117.0V134.2" stroke="#e83434" stroke-width="1.2" fill="none"/>
<path d="M1111.0 88.2V127.3" stroke="#54fcfc" stroke-width="1.2" fill="none"/>
<rect x="1108.5" y="108.8" width="4.8" height="6.2" fill="#54fcfc"/>
<path d="M1117.3 121.1V134.2" stroke="#54fcfc" stroke-width="1.2" fill="none"/>
<rect x="1114.9" y="121.1" width="4.8" height="5.5" fill="#54fcfc"/>
<path d="M1123.6 120.4V138.5" stroke="#54fcfc" stroke-width="1.2" fill="none"/>
<rect x="1121.2" y="120.8" width="4.8" height="5.8" fill="#54fcfc"/>
<rect x="1127.9" y="126.5" width="4.0" height="1.8" rx="0.9" stroke="#e83434" stroke-width="1.15" fill="#000"/>
<path d="M1129.9 113.6V126.0M1129.9 128.8V132.1" stroke="#e83434" stroke-width="1.2" fill="none"/>
<path d="M1136.2 123.9V145.5" stroke="#54fcfc" stroke-width="1.2" fill="none"/>
<rect x="1133.8" y="127.0" width="4.8" height="12.0" fill="#54fcfc"/>
<rect x="1140.5" y="119.5" width="4.0" height="16.5" rx="0.9" stroke="#e83434" stroke-width="1.15" fill="#000"/>
<path d="M1142.5 116.0V119.0M1142.5 136.5V145.0" stroke="#e83434" stroke-width="1.2" fill="none"/>
<path d="M1148.8 106.1V134.2" stroke="#54fcfc" stroke-width="1.2" fill="none"/>
<rect x="1146.4" y="117.1" width="4.8" height="6.2" fill="#54fcfc"/>
<rect x="1153.1" y="120.8" width="4.0" height="2.0" rx="0.9" stroke="#e83434" stroke-width="1.15" fill="#000"/>
<path d="M1155.1 108.2V120.3M1155.1 123.3V128.8" stroke="#e83434" stroke-width="1.2" fill="none"/>
<path d="M1161.4 106.1V143.0M1158.8 117.5H1164.0" stroke="#54fcfc" stroke-width="1.2" fill="none"/>
<rect x="1165.7" y="94.3" width="4.0" height="30.6" rx="0.9" stroke="#e83434" stroke-width="1.15" fill="#000"/>
<path d="M1167.7 86.9V93.8" stroke="#e83434" stroke-width="1.2" fill="none"/>
<path d="M1174.0 88.3V116.4" stroke="#54fcfc" stroke-width="1.2" fill="none"/>
<rect x="1171.6" y="93.8" width="4.8" height="22.6" fill="#54fcfc"/>
<rect x="1178.4" y="105.9" width="4.0" height="18.3" rx="0.9" stroke="#e83434" stroke-width="1.15" fill="#000"/>
<path d="M1180.4 64.9V105.4" stroke="#e83434" stroke-width="1.2" fill="none"/>
<rect x="1184.7" y="51.7" width="4.0" height="53.9" rx="0.9" stroke="#e83434" stroke-width="1.15" fill="#000"/>
<path d="M1186.7 106.1V115.7" stroke="#e83434" stroke-width="1.2" fill="none"/>
</g>
<polyline points="6.7,319.8 13.0,314.0 19.4,312.8 25.7,311.5 32.0,309.5 38.3,310.5 44.6,314.0 50.9,316.2 57.2,319.0 63.5,324.0 69.8,330.5 76.1,331.5 82.4,332.5 88.7,333.0 95.0,332.5 101.5,333.0 107.8,334.0 114.0,334.5 120.3,335.0 126.6,334.8 132.9,334.0 139.2,332.0 145.5,330.5 151.8,329.8 158.1,327.5 164.5,326.5 170.8,322.0 177.1,317.5 183.4,314.5 189.7,310.0 196.0,303.0 202.3,300.5 208.6,300.2 214.9,299.5 221.2,304.0 227.5,310.0 233.9,311.2 240.2,308.0 246.5,306.5 252.8,303.0 259.1,298.5 265.4,297.5 271.7,299.5 278.0,300.5 284.3,300.5 290.6,303.0 297.0,303.5 303.3,303.5 309.6,303.5 315.9,304.0 322.2,304.5 328.5,305.0 334.8,307.0 341.1,307.5 347.4,308.0 353.7,309.0 360.0,309.0 366.4,308.0 372.7,305.0 379.0,305.0 385.3,304.5 391.6,304.5 397.9,304.5 404.2,304.5 410.5,304.0 416.8,302.5 423.2,300.5 429.5,296.5 435.8,291.5 442.1,282.0 448.4,276.5 454.7,273.0 461.0,271.0 467.3,270.0 473.6,275.0 479.9,278.5 486.3,280.0 492.6,281.1 498.9,278.8 505.2,270.8 511.5,262.8 517.8,244.5 524.1,232.4 530.4,231.3 536.7,231.9 543.0,235.9 549.3,246.7 555.7,256.5 562.0,262.8 568.3,267.9 574.6,269.1 580.9,267.9 587.2,265.1 593.5,263.9 599.8,262.2 606.1,261.5 612.5,262.0 618.8,262.0 625.1,260.5 631.4,257.0 637.7,255.0 644.0,254.5 650.3,255.5 656.6,258.5 662.9,263.0 669.2,267.5 675.5,269.0 681.9,269.0 688.2,268.0 694.5,264.0 700.8,259.0 707.1,254.0 713.4,249.0 719.7,246.0 726.0,248.0 732.3,250.0 738.6,251.0 744.9,253.5 751.3,256.5 757.6,256.0 763.9,255.5 770.2,256.0 776.5,256.5 782.8,257.0 789.1,256.0 795.4,255.5 801.7,253.0 808.0,246.5 814.3,241.0 820.7,228.5 827.0,216.1 833.3,206.5 839.6,197.6 845.9,191.4 852.2,186.6 858.5,184.3 864.8,185.9 871.1,190.0 877.4,194.1 883.8,205.8 890.1,214.1 896.4,218.2 902.7,221.6 909.0,224.4 915.3,223.0 921.6,223.7 927.9,227.8 934.2,234.8 940.5,241.0 946.8,245.1 953.2,247.9 959.5,246.5 965.8,243.8 972.1,241.7 978.4,242.4 984.7,247.2 991.0,255.4 997.3,262.3 1003.6,265.7 1009.9,259.6 1016.2,254.8 1022.6,251.3 1028.9,239.0 1035.2,222.5 1041.5,209.0 1047.8,197.5 1054.1,165.2 1060.4,142.4 1066.7,130.1 1073.0,126.6 1079.4,123.2 1085.7,130.1 1092.0,146.5 1098.3,145.9 1104.6,134.9 1110.9,127.3 1117.2,122.5 1123.5,117.7 1129.8,119.5 1136.1,127.0 1142.5,127.7 1148.8,126.0 1155.1,126.0 1161.4,123.3 1167.7,116.4 1174.0,114.4 1180.3,110.9 1186.6,97.9" fill="none" stroke="#f4f4f4" stroke-width="1.1" stroke-linejoin="round"/>
<polyline points="6.7,331.2 13.0,328.0 19.4,325.0 25.7,321.8 32.0,317.5 38.3,314.5 44.6,313.8 50.9,314.5 57.2,316.0 63.5,318.0 69.8,320.5 76.1,323.0 82.4,325.0 88.7,327.2 95.0,329.2 101.5,332.0 107.8,333.2 114.0,333.8 120.3,333.8 132.9,333.5 145.5,333.0 158.1,332.0 164.5,330.5 170.8,327.0 177.1,324.0 183.4,321.5 189.7,318.5 196.0,315.0 202.3,311.5 208.6,309.0 214.9,307.5 221.2,306.5 227.5,307.0 233.9,306.5 240.2,304.5 246.5,303.0 252.8,303.0 259.1,304.5 265.4,305.0 271.7,305.0 278.0,304.5 284.3,301.5 290.6,300.5 297.0,300.5 303.3,301.0 309.6,302.0 315.9,304.0 322.2,304.5 328.5,305.5 334.8,306.0 341.1,306.0 347.4,306.5 353.7,306.8 360.0,307.5 372.7,307.5 385.3,307.2 391.6,306.5 397.9,305.5 404.2,305.0 410.5,304.5 416.8,303.5 423.2,302.0 429.5,300.0 435.8,297.0 442.1,293.0 448.4,289.5 454.7,287.0 461.0,283.5 467.3,280.5 473.6,278.5 479.9,277.5 486.3,277.4 492.6,277.1 498.9,274.8 505.2,272.5 511.5,269.6 517.8,262.8 524.1,257.1 530.4,254.2 536.7,251.3 543.0,249.0 549.3,246.2 555.7,244.7 562.0,246.2 568.3,249.0 574.6,251.9 580.9,256.5 587.2,261.6 593.5,263.9 599.8,265.1 606.1,265.5 612.5,265.5 618.8,265.0 625.1,262.5 631.4,259.5 637.7,258.0 644.0,259.0 650.3,260.0 656.6,260.0 662.9,260.0 669.2,261.5 675.5,262.0 681.9,262.5 688.2,263.0 694.5,263.0 700.8,263.0 707.1,262.0 713.4,259.5 719.7,257.0 726.0,256.0 732.3,254.5 738.6,254.0 744.9,251.0 751.3,251.0 757.6,251.5 763.9,253.0 770.2,254.0 776.5,254.5 782.8,256.5 789.1,256.5 795.4,256.0 801.7,254.0 808.0,250.5 814.3,248.5 820.7,242.0 827.0,237.2 833.3,231.1 839.6,223.5 845.9,214.8 852.2,207.2 858.5,201.0 864.8,197.6 871.1,195.5 875.4,193.5 883.8,196.9 890.1,199.0 896.4,201.7 902.7,205.1 909.0,208.6 915.3,214.1 921.6,218.9 927.9,223.0 934.2,228.0 940.5,232.1 946.8,234.1 953.2,236.2 959.5,236.9 965.8,239.0 972.1,241.0 978.4,243.1 984.7,246.5 991.0,249.9 997.3,252.7 1003.6,253.4 1009.9,251.3 1016.2,249.9 1022.6,251.3 1028.9,250.6 1035.2,245.1 1041.5,236.2 1047.8,225.2 1054.1,207.8 1060.4,189.9 1066.7,176.2 1073.0,168.0 1079.4,158.4 1085.7,150.1 1092.0,144.2 1098.3,137.5 1104.6,130.7 1110.9,126.6 1117.2,126.6 1123.5,132.1 1129.8,132.8 1136.1,130.7 1142.5,127.3 1148.8,124.0 1155.1,122.6 1161.4,121.2 1167.7,121.2 1174.0,120.5 1180.3,119.2 1186.6,112.3" fill="none" stroke="#e6e600" stroke-width="1.15" stroke-linejoin="round"/>
<polyline points="6.7,342.0 13.0,340.8 19.4,339.5 25.7,338.5 32.0,336.5 38.3,333.0 44.6,330.0 50.9,328.0 57.2,327.5 63.5,326.5 69.8,325.5 76.1,325.2 82.4,324.5 88.7,323.5 95.0,322.5 101.5,322.5 107.8,322.5 114.0,323.5 120.3,324.5 126.6,325.5 132.9,327.0 139.2,328.5 145.5,329.0 151.8,329.5 158.1,330.0 164.5,330.5 170.8,330.0 177.1,329.0 183.4,327.8 189.7,326.0 196.0,323.7 202.3,322.0 208.6,321.2 214.9,320.5 221.2,319.5 227.5,318.5 233.9,316.8 240.2,315.0 246.5,313.5 252.8,311.5 259.1,309.5 265.4,307.5 271.7,306.0 278.0,305.0 284.3,303.5 290.6,302.5 297.0,302.5 303.3,303.0 309.6,303.0 315.9,303.0 322.2,304.0 328.5,305.0 334.8,304.8 341.1,304.5 347.4,303.8 353.7,303.5 360.0,304.1 372.7,305.0 385.3,305.5 397.9,305.5 410.5,305.5 416.8,305.0 423.2,304.5 429.5,304.0 435.8,302.0 442.1,300.0 448.4,298.5 454.7,296.5 461.0,294.5 467.3,293.0 473.6,292.0 479.9,290.5 486.3,289.7 492.6,289.1 498.9,286.2 505.2,282.8 511.5,279.9 517.8,274.8 524.1,270.8 530.4,267.9 536.7,265.1 543.0,262.8 549.3,261.6 555.7,261.1 562.0,261.1 568.3,261.1 574.6,260.8 580.9,260.5 587.2,259.3 593.5,258.2 599.8,257.6 606.1,256.5 612.5,256.0 618.8,255.5 625.1,255.0 631.4,254.5 637.7,254.5 644.0,258.5 650.3,260.5 656.6,261.5 662.9,262.0 669.2,262.5 675.5,263.5 681.9,264.0 688.2,263.5 694.5,261.5 700.8,260.5 707.1,260.0 713.4,259.5 719.7,258.5 732.3,258.0 744.9,257.0 757.6,257.0 770.2,257.0 782.8,256.5 795.4,255.0 801.7,253.5 808.0,251.5 814.3,250.0 820.7,247.5 827.0,245.5 833.3,242.5 839.6,239.5 852.2,232.6 864.8,225.7 877.4,220.2 890.1,216.8 902.7,213.4 915.3,210.6 927.9,209.9 934.2,210.8 940.5,212.2 946.8,214.9 953.2,217.7 959.5,219.7 965.8,221.8 972.1,225.2 978.4,229.3 984.7,232.8 991.0,236.2 997.3,239.6 1003.6,242.4 1009.9,243.1 1016.2,243.8 1022.6,243.8 1028.9,243.8 1035.2,242.4 1041.5,239.0 1047.8,235.5 1054.1,230.7 1060.4,222.0 1066.7,214.7 1073.0,208.5 1079.4,203.7 1085.7,200.9 1092.0,197.5 1098.3,192.0 1104.6,185.1 1110.9,176.2 1117.2,168.7 1123.5,160.8 1129.8,154.7 1136.1,149.2 1142.5,143.5 1148.8,136.8 1155.1,132.0 1161.4,129.2 1167.7,125.8 1174.0,123.7 1180.3,123.0 1186.6,121.7" fill="none" stroke="#e070e0" stroke-width="1.15" stroke-linejoin="round"/>
<polyline points="6.7,339.8 19.4,338.5 32.0,336.8 44.6,335.0 57.2,334.2 69.8,334.0 82.4,333.8 95.0,333.2 101.5,332.5 107.8,331.0 114.0,330.0 120.3,329.5 132.9,328.5 145.5,327.0 158.1,325.5 170.8,324.2 183.4,323.8 196.0,323.0 208.6,322.0 221.2,321.8 227.5,322.8 233.9,322.5 240.2,321.4 252.8,319.0 265.4,316.5 278.0,314.0 284.3,312.5 290.6,312.5 297.0,311.5 303.3,310.5 309.6,309.0 315.9,308.0 322.2,307.5 328.5,306.0 334.8,305.5 341.1,305.5 347.4,305.2 353.7,305.0 360.0,304.6 372.7,304.5 385.3,304.5 397.9,304.5 410.5,304.0 416.8,303.5 423.2,302.5 429.5,302.0 435.8,301.5 442.1,300.5 448.4,299.5 454.7,299.0 461.0,298.0 467.3,297.0 473.6,296.5 479.9,295.9 486.3,295.4 492.6,294.3 498.9,292.5 505.2,290.8 511.5,288.5 517.8,285.1 524.1,282.2 530.4,279.9 536.7,278.2 543.0,275.9 549.3,274.8 555.7,273.6 562.0,271.9 568.3,270.8 574.6,269.6 580.9,268.5 587.2,266.8 593.5,265.6 599.8,264.6 606.1,263.5 612.5,263.0 618.8,262.5 625.1,262.0 631.4,260.5 637.7,259.5 644.0,259.8 650.3,260.0 656.6,259.8 662.9,259.0 669.2,257.5 675.5,257.5 681.9,257.0 688.2,257.5 694.5,257.8 700.8,258.5 707.1,259.0 713.4,259.5 719.7,260.0 732.3,260.0 744.9,259.5 757.6,258.5 770.2,258.0 782.8,257.5 795.4,256.5 808.0,254.5 820.7,252.0 827.0,251.0 833.3,248.5 839.6,245.5 852.2,240.2 864.8,234.7 877.4,230.5 890.1,229.9 902.7,227.8 915.3,225.7 927.9,225.1 934.2,224.5 946.8,224.5 959.5,223.8 965.8,222.5 972.1,221.1 978.4,221.8 984.7,223.2 991.0,223.8 997.3,225.2 1003.6,226.3 1009.9,226.6 1016.2,228.0 1022.6,230.0 1028.9,231.4 1035.2,231.4 1041.5,231.0 1047.8,230.0 1054.1,228.0 1060.4,223.8 1073.0,217.4 1085.7,214.0 1098.3,208.5 1110.9,201.6 1123.5,192.7 1129.8,187.6 1136.1,184.3 1142.5,179.4 1148.8,175.9 1155.1,171.8 1161.4,167.7 1167.7,162.2 1174.0,156.7 1180.3,151.2 1186.0,146.0" fill="none" stroke="#00d000" stroke-width="1.15" stroke-linejoin="round"/>
<polyline points="6.7,345.5 19.4,343.5 32.0,341.5 44.6,340.3 57.2,339.8 69.8,339.2 82.4,338.5 95.0,338.0 107.8,337.0 120.3,336.0 132.9,335.5 145.5,335.0 158.1,334.5 170.8,333.5 183.4,332.2 196.0,331.2 208.6,330.0 221.2,329.8 233.9,328.5 245.0,327.0 252.8,326.0 265.4,325.2 278.0,324.0 290.6,322.5 303.3,320.5 315.9,318.5 328.5,317.0 334.8,316.0 347.4,315.2 353.7,314.5 365.0,314.5 372.7,313.5 385.3,313.5 410.5,313.5 423.2,312.5 435.8,311.0 448.4,309.0 461.0,307.0 473.6,305.0 485.0,303.5 503.0,300.0 511.5,297.1 524.1,293.7 536.7,291.4 549.3,289.7 562.0,288.5 574.6,287.4 587.2,285.7 599.8,284.8 612.5,283.0 625.1,281.5 637.7,280.0 650.3,278.8 662.9,277.5 675.5,277.0 681.9,276.5 688.2,275.0 700.8,273.5 713.4,271.5 725.0,270.0 732.3,268.5 744.9,266.5 757.6,265.0 770.2,263.0 782.8,262.0 795.4,260.5 808.0,258.5 820.7,256.0 833.3,253.0 845.0,251.0 874.0,245.0 890.1,243.6 902.7,242.9 915.3,242.2 927.9,242.2 940.0,241.5 946.8,241.0 959.5,239.6 972.1,239.6 984.7,239.6 997.3,239.6 1009.9,239.6 1022.6,239.0 1028.9,238.3 1035.2,236.2 1041.5,234.1 1047.8,232.8 1054.1,230.7 1070.8,225.0 1085.7,221.5 1098.3,216.7 1110.9,212.6 1123.5,208.5 1136.1,203.7 1145.0,201.2 1155.1,196.5 1161.4,194.5 1167.7,191.7 1174.0,189.0 1180.3,186.9 1186.0,184.9" fill="none" stroke="#00c4d8" stroke-width="1.15" stroke-linejoin="round"/>
<text x="1145.5" y="55.5" font-size="11" fill="#e8e8e8" textLength="27.5" lengthAdjust="spacingAndGlyphs">36.59</text>
<path d="M1175 51.5H1185" stroke="#ddd" stroke-width="1"/><circle cx="1184.3" cy="51.5" r="1.3" fill="#ddd"/>
<text x="126.5" y="344.3" font-size="11" fill="#e8e8e8" textLength="27.5" lengthAdjust="spacingAndGlyphs">18.72</text>
<path d="M115 340.4H124.5M115 340.4l3 -2.2M115 340.4l3 2.2" stroke="#ddd" stroke-width="1" fill="none"/>
<path d="M197 36.3l3.8 3.8l-3.8 3.8l-3.8 -3.8z" fill="#3aa6dc"/>
<path d="M480 36.3l3.8 3.8l-3.8 3.8l-3.8 -3.8z" fill="#3aa6dc"/>
<path d="M525.5 36.3l3.8 3.8l-3.8 3.8l-3.8 -3.8z" fill="#3aa6dc"/>
<path d="M531.5 36.3l3.8 3.8l-3.8 3.8l-3.8 -3.8z" fill="#3aa6dc"/>
<path d="M752 36.3l3.8 3.8l-3.8 3.8l-3.8 -3.8z" fill="#3aa6dc"/>
<path d="M840 36.3l3.8 3.8l-3.8 3.8l-3.8 -3.8z" fill="#3aa6dc"/>
<path d="M1042 36.3l3.8 3.8l-3.8 3.8l-3.8 -3.8z" fill="#3aa6dc"/>
<path d="M1061 36.3l3.8 3.8l-3.8 3.8l-3.8 -3.8z" fill="#3aa6dc"/>
<path d="M1067.3 36.3l3.8 3.8l-3.8 3.8l-3.8 -3.8z" fill="#3aa6dc"/>
<polyline points="6.7,405.9 13.0,436.8 19.3,458.5 25.6,454.3 31.9,446.1 38.2,457.4 44.6,489.4 50.9,492.5 57.2,495.6 63.5,476.0 69.8,462.6 76.1,489.4 82.4,493.5 88.7,501.8 95.0,509.5 101.3,514.9" fill="none" stroke="#e81212" stroke-width="1.15" stroke-linejoin="round"/>
<polyline points="101.3,514.9 107.7,520.5 114.0,511.2 120.3,525.2" fill="none" stroke="#dcdc1c" stroke-width="1.15" stroke-linejoin="round"/>
<polyline points="120.3,525.2 126.6,528.1 132.9,554.9 139.2,550.8 145.5,546.8 151.8,576.7 158.1,571.4 164.4,556.5 170.8,522.9 177.1,525.2 183.4,528.1" fill="none" stroke="#12d812" stroke-width="1.15" stroke-linejoin="round"/>
<polyline points="183.4,528.1 189.7,484.2" fill="none" stroke="#dcdc1c" stroke-width="1.15" stroke-linejoin="round"/>
<polyline points="189.7,484.2 196.0,439.9 202.3,437.9 208.6,456.4 214.9,451.7 221.2,489.4 227.5,491.0 233.9,461.6 240.2,435.2 246.5,451.3 252.8,455.4 259.1,444.7 265.4,464.0 271.7,458.5 278.0,479.5 284.3,469.8 290.6,505.3 297.0,487.9 303.3,487.3 309.6,507.5" fill="none" stroke="#e81212" stroke-width="1.15" stroke-linejoin="round"/>
<polyline points="309.6,507.5 315.9,526.6" fill="none" stroke="#dcdc1c" stroke-width="1.15" stroke-linejoin="round"/>
<polyline points="315.9,526.6 322.2,543.5 328.5,537.6 334.8,555.5 341.1,582.3 347.4,567.9 353.7,550.8 360.1,555.1 366.4,525.0 372.7,531.8 379.0,565.2 385.3,577.1 391.6,550.8 397.9,555.5 404.2,565.2 410.5,555.1 416.8,528.7 423.2,517.0" fill="none" stroke="#12d812" stroke-width="1.15" stroke-linejoin="round"/>
<polyline points="423.2,517.0 429.5,513.2" fill="none" stroke="#dcdc1c" stroke-width="1.15" stroke-linejoin="round"/>
<polyline points="429.5,513.2 435.8,484.2 442.1,468.2 448.4,483.2 454.7,477.4 461.0,484.2 467.3,477.0 473.6,502.8 479.9,507.9 486.3,504.4 492.6,493.5 498.9,452.3 505.2,444.5 511.5,444.5 517.8,381.2 524.1,381.2 530.4,450.2 536.7,469.8 543.1,473.3 549.4,474.3 555.7,486.3" fill="none" stroke="#e81212" stroke-width="1.15" stroke-linejoin="round"/>
<polyline points="555.7,486.3 562.0,527.3" fill="none" stroke="#dcdc1c" stroke-width="1.15" stroke-linejoin="round"/>
<polyline points="562.0,527.3 568.3,518.4 574.6,530.1" fill="none" stroke="#12d812" stroke-width="1.15" stroke-linejoin="round"/>
<polyline points="574.6,530.1 580.9,494.5 587.2,548.7" fill="none" stroke="#dcdc1c" stroke-width="1.15" stroke-linejoin="round"/>
<polyline points="587.2,548.7 593.5,543.1 599.8,546.2 606.1,526.2 612.5,539.0" fill="none" stroke="#12d812" stroke-width="1.15" stroke-linejoin="round"/>
<polyline points="612.5,539.0 618.8,506.0" fill="none" stroke="#dcdc1c" stroke-width="1.15" stroke-linejoin="round"/>
<polyline points="618.8,506.0 625.1,492.5 631.4,458.1 637.7,473.5" fill="none" stroke="#e81212" stroke-width="1.15" stroke-linejoin="round"/>
<polyline points="637.7,473.5 644.0,537.0" fill="none" stroke="#dcdc1c" stroke-width="1.15" stroke-linejoin="round"/>
<polyline points="644.0,537.0 650.3,560.6 656.6,563.7 662.9,611.6 669.2,608.0 675.6,558.6 681.9,561.0 688.2,525.6" fill="none" stroke="#12d812" stroke-width="1.15" stroke-linejoin="round"/>
<polyline points="688.2,525.6 694.5,512.8" fill="none" stroke="#dcdc1c" stroke-width="1.15" stroke-linejoin="round"/>
<polyline points="694.5,512.8 700.8,483.2 707.1,476.0 713.4,485.9 719.7,487.3" fill="none" stroke="#e81212" stroke-width="1.15" stroke-linejoin="round"/>
<polyline points="719.7,487.3 726.0,534.5 732.4,511.2" fill="none" stroke="#dcdc1c" stroke-width="1.15" stroke-linejoin="round"/>
<polyline points="732.4,511.2 738.7,513.9 745.0,506.6" fill="none" stroke="#e81212" stroke-width="1.15" stroke-linejoin="round"/>
<polyline points="745.0,506.6 751.3,524.2" fill="none" stroke="#dcdc1c" stroke-width="1.15" stroke-linejoin="round"/>
<polyline points="751.3,524.2 757.6,520.5 763.9,519.0 770.2,532.8 776.5,576.1 782.8,566.4 789.1,529.3" fill="none" stroke="#12d812" stroke-width="1.15" stroke-linejoin="round"/>
<polyline points="789.1,529.3 795.5,504.4" fill="none" stroke="#dcdc1c" stroke-width="1.15" stroke-linejoin="round"/>
<polyline points="795.5,504.4 801.8,495.6 808.1,456.4 814.4,483.2 820.7,413.1 827.0,405.5 833.3,417.3 839.6,413.1 845.9,448.2 852.2,407.4 858.5,419.3 864.9,448.8 871.2,442.4 877.5,444.0 883.8,463.2 890.1,448.2 896.4,449.2 902.7,439.3 909.0,442.6 915.3,446.1 921.6,464.0 928.0,455.4 934.3,486.3 940.6,507.1 946.9,513.7" fill="none" stroke="#e81212" stroke-width="1.15" stroke-linejoin="round"/>
<polyline points="946.9,513.7 953.2,549.9 959.5,500.3 965.8,549.3" fill="none" stroke="#dcdc1c" stroke-width="1.15" stroke-linejoin="round"/>
<polyline points="965.8,549.3 972.1,556.5 978.4,594.7 984.8,607.4 991.1,611.1 997.4,638.3 1003.7,623.0 1010.0,548.3 1016.3,564.8 1022.6,597.7" fill="none" stroke="#12d812" stroke-width="1.15" stroke-linejoin="round"/>
<polyline points="1022.6,597.7 1028.9,514.3" fill="none" stroke="#dcdc1c" stroke-width="1.15" stroke-linejoin="round"/>
<polyline points="1028.9,514.3 1035.2,463.6 1041.5,439.9 1047.8,446.1 1054.2,381.2 1060.5,381.2 1066.8,381.2 1073.1,408.0 1079.4,387.0 1085.7,389.0 1092.0,386.3 1098.3,381.2 1104.6,381.2 1111.0,381.2 1117.3,381.2 1123.6,381.2 1129.9,381.2 1136.2,381.2 1142.5,381.2 1148.8,381.2 1155.1,385.7 1161.4,381.2 1167.7,381.2 1174.0,391.5 1180.4,441.0 1186.7,384.3" fill="none" stroke="#e81212" stroke-width="1.15" stroke-linejoin="round"/>
<line x1="6.5" x2="1186.5" y1="516.7" y2="516.7" stroke="#f0f0f0" stroke-width="1.2" stroke-dasharray="3 2"/>
<text x="1204" y="41" font-size="11" fill="#ff3030" textLength="27.5" lengthAdjust="spacingAndGlyphs">37.60</text>
<text x="1204" y="105.3" font-size="11" fill="#ff3030" textLength="27.5" lengthAdjust="spacingAndGlyphs">33.59</text>
<text x="1204" y="170.1" font-size="11" fill="#ff3030" textLength="27.5" lengthAdjust="spacingAndGlyphs">29.59</text>
<text x="1204" y="235.9" font-size="11" fill="#ff3030" textLength="27.5" lengthAdjust="spacingAndGlyphs">25.53</text>
<text x="1204" y="300.9" font-size="11" fill="#ff3030" textLength="27.5" lengthAdjust="spacingAndGlyphs">21.52</text>
<text x="1204" y="385.2" font-size="11" fill="#ff3030" textLength="33" lengthAdjust="spacingAndGlyphs">+100.0</text>
<text x="1204" y="421.3" font-size="11" fill="#ff3030" textLength="33" lengthAdjust="spacingAndGlyphs">+89.43</text>
<text x="1204" y="458.3" font-size="11" fill="#ff3030" textLength="33" lengthAdjust="spacingAndGlyphs">+78.60</text>
<text x="1204" y="495.4" font-size="11" fill="#ff3030" textLength="33" lengthAdjust="spacingAndGlyphs">+67.77</text>
<text x="1204" y="532.3" font-size="11" fill="#ff3030" textLength="33" lengthAdjust="spacingAndGlyphs">+56.94</text>
<text x="1204" y="569.2" font-size="11" fill="#ff3030" textLength="33" lengthAdjust="spacingAndGlyphs">+46.11</text>
<text x="1204" y="605.9" font-size="11" fill="#ff3030" textLength="33" lengthAdjust="spacingAndGlyphs">+35.28</text>
<rect x="2.5" y="639" width="1" height="3" fill="#8c0000"/>
<text x="3.7" y="650.2" font-size="11" fill="#ff3030" textLength="12.2" lengthAdjust="spacingAndGlyphs">04</text>
<rect x="69.0" y="639" width="1" height="3" fill="#8c0000"/>
<text x="70.2" y="650.2" font-size="11" fill="#ff3030" textLength="12.2" lengthAdjust="spacingAndGlyphs">05</text>
<rect x="144.7" y="639" width="1" height="3" fill="#8c0000"/>
<text x="145.9" y="650.2" font-size="11" fill="#ff3030" textLength="12.2" lengthAdjust="spacingAndGlyphs">06</text>
<rect x="270.9" y="639" width="1" height="3" fill="#8c0000"/>
<text x="272.1" y="650.2" font-size="11" fill="#ff3030" textLength="12.2" lengthAdjust="spacingAndGlyphs">07</text>
<rect x="416.0" y="639" width="1" height="3" fill="#8c0000"/>
<text x="417.2" y="650.2" font-size="11" fill="#ff3030" textLength="12.2" lengthAdjust="spacingAndGlyphs">08</text>
<rect x="548.6" y="639" width="1" height="3" fill="#8c0000"/>
<text x="549.8" y="650.2" font-size="11" fill="#ff3030" textLength="12.2" lengthAdjust="spacingAndGlyphs">09</text>
<rect x="687.4" y="639" width="1" height="3" fill="#8c0000"/>
<text x="688.6" y="650.2" font-size="11" fill="#ff3030" textLength="12.2" lengthAdjust="spacingAndGlyphs">10</text>
<rect x="794.7" y="639" width="1" height="3" fill="#8c0000"/>
<text x="795.9" y="650.2" font-size="11" fill="#ff3030" textLength="12.2" lengthAdjust="spacingAndGlyphs">11</text>
<rect x="920.9" y="639" width="1" height="3" fill="#8c0000"/>
<text x="922.1" y="650.2" font-size="11" fill="#ff3030" textLength="12.2" lengthAdjust="spacingAndGlyphs">12</text>
<rect x="1066.0" y="639" width="1" height="3" fill="#8c0000"/>
<text x="1067.2" y="650.2" font-size="11" fill="#ff3030" textLength="12.2" lengthAdjust="spacingAndGlyphs">01</text>
<text x="217.8" y="359.3" font-size="12" font-weight="bold" font-family="'Liberation Serif',serif" fill="#ff2a2a">q</text>
<rect x="746" y="349.6" width="11" height="11.6" fill="#8e0000"/><text x="746.2" y="358.9" font-size="10.6" fill="#fff">财</text>
<rect x="1055" y="349.3" width="18" height="11.8" fill="#8e0000"/><text x="1055.2" y="358.7" font-size="10.6" fill="#fff" textLength="17.4" lengthAdjust="spacing">财榜</text>
<text x="2.8" y="31.3" font-size="12" fill="#e6e6e6" textLength="21.4" lengthAdjust="spacingAndGlyphs">日线</text>
<text x="31" y="31.3" font-size="12" fill="#e6e6e6" textLength="44" lengthAdjust="spacingAndGlyphs">众望布艺</text>
<text x="78.6" y="31.3" font-size="12" fill="#f0f0f0" textLength="53.6" lengthAdjust="spacingAndGlyphs">MA5: 33.77</text>
<text x="132.2" y="32.5" font-size="15" fill="#ff3c3c" stroke="#ff3c3c" stroke-width="0.35" textLength="6" lengthAdjust="spacingAndGlyphs">↑</text>
<text x="141.8" y="31.3" font-size="12" fill="#e6e600" textLength="59.5" lengthAdjust="spacingAndGlyphs">MA10: 32.90</text>
<text x="201.7" y="32.5" font-size="15" fill="#ff3c3c" stroke="#ff3c3c" stroke-width="0.35" textLength="6" lengthAdjust="spacingAndGlyphs">↑</text>
<text x="211" y="31.3" font-size="12" fill="#e070e0" textLength="60" lengthAdjust="spacingAndGlyphs">MA20: 32.24</text>
<text x="271.7" y="32.5" font-size="15" fill="#ff3c3c" stroke="#ff3c3c" stroke-width="0.35" textLength="6" lengthAdjust="spacingAndGlyphs">↑</text>
<text x="280.6" y="31.3" font-size="12" fill="#00d000" textLength="59.5" lengthAdjust="spacingAndGlyphs">MA30: 30.82</text>
<text x="340.7" y="32.5" font-size="15" fill="#ff3c3c" stroke="#ff3c3c" stroke-width="0.35" textLength="6" lengthAdjust="spacingAndGlyphs">↑</text>
<text x="349.5" y="31.3" font-size="12" fill="#00c4d8" textLength="59.5" lengthAdjust="spacingAndGlyphs">MA60: 28.36</text>
<text x="409.7" y="32.5" font-size="15" fill="#ff3c3c" stroke="#ff3c3c" stroke-width="0.35" textLength="6" lengthAdjust="spacingAndGlyphs">↑</text>
<text x="3" y="376.2" font-size="12" fill="#e6e6e6" textLength="99.5" lengthAdjust="spacingAndGlyphs">动能评分(23,200,60)</text>
<text x="106.5" y="376.2" font-size="12" fill="#f0f0f0" textLength="63" lengthAdjust="spacingAndGlyphs">MOM: +23.61</text>
<text x="169.5" y="377.4" font-size="15" fill="#ff3c3c" stroke="#ff3c3c" stroke-width="0.35" textLength="6" lengthAdjust="spacingAndGlyphs">↑</text>
<text x="179.8" y="376.2" font-size="12" fill="#e6e600" textLength="89" lengthAdjust="spacingAndGlyphs">INDEXMOM: +4.10</text>
<text x="268.5" y="377.4" font-size="15" fill="#3ac8f0" stroke="#3ac8f0" stroke-width="0.35" textLength="6" lengthAdjust="spacingAndGlyphs">↓</text>
<text x="278" y="376.2" font-size="12" fill="#00b050" textLength="61" lengthAdjust="spacingAndGlyphs">差量: +19.52</text>
<text x="339.2" y="377.4" font-size="15" fill="#ff3c3c" stroke="#ff3c3c" stroke-width="0.35" textLength="6" lengthAdjust="spacingAndGlyphs">↑</text>
<text x="348.5" y="376.2" font-size="12" fill="#f0f0f0" textLength="71" lengthAdjust="spacingAndGlyphs">合格线: +60.00</text>
<text x="423" y="376.2" font-size="12" fill="#ff2020" textLength="57" lengthAdjust="spacingAndGlyphs">及格: 99.03</text>
<text x="480.2" y="377.4" font-size="15" fill="#ff3c3c" stroke="#ff3c3c" stroke-width="0.35" textLength="6" lengthAdjust="spacingAndGlyphs">↑</text>

<g fill="none" stroke="#cfcfcf" stroke-width="1.05" stroke-linecap="round" stroke-linejoin="round">
<path d="M1064.6 21.3L1067.8 21.3L1068.1 22.9L1068.8 23.3L1070.3 22.7L1071.9 25.6L1070.7 26.6L1070.7 27.4L1071.9 28.4L1070.3 31.3L1068.8 30.7L1068.1 31.1L1067.8 32.7L1064.6 32.7L1064.3 31.1L1063.6 30.7L1062.1 31.3L1060.5 28.4L1061.7 27.4L1061.7 26.6L1060.5 25.6L1062.1 22.7L1063.6 23.3L1064.3 22.9z"/><circle cx="1066.2" cy="27" r="1.7"/>
<path d="M1078.6 32c0.8 -4 3.6 -8.2 9.6 -10.6c-1 5 -4.4 8.6 -9.6 10.6zM1078.6 32l3.4 -3.6"/>
<path d="M1095.9 27c3 -5.6 9.6 -5.6 12.6 0c-3 5.6 -9.6 5.6 -12.6 0z"/><circle cx="1102.2" cy="27" r="2.2"/>
<rect x="1115.2" y="24" width="10.4" height="8.2" rx="1.4"/><path d="M1117.8 23.8v-1.2c0-1.6 5.2-1.6 5.2 0v1.2M1115.4 27.6h10M1119 26.8v1.8M1121.8 26.8v1.8"/>
<path d="M1136 28.4v-5.2c0-1.1 1.6-1.1 1.6 0v3v-4.4c0-1.1 1.6-1.1 1.6 0v4.2v-3.8c0-1.1 1.6-1.1 1.6 0v4.2v-2.6c0-1.1 1.6-1.1 1.6 0v5.4c0 2.6-1.6 4.2-3.9 4.2c-2.2 0-3-1-3.8-2.4l-1.9-3.2c-.5-1 .9-1.7 1.5-.9z"/>
<rect x="1152.2" y="25.8" width="8.8" height="6" rx="0.7"/><path d="M1153.8 25.6v-1.8c0-3.6 6-3.6 6 -0.4"/>
<circle cx="1174.8" cy="27.4" r="5.7"/><path d="M1171.8 27.4h6M1174.8 24.4v6"/>
<circle cx="1192.8" cy="27.4" r="5.7"/><path d="M1189.8 27.4h6"/>
</g>
</svg>
<div id="tb">
<div class="b nb" style="left:0;width:19px"><svg width="13" height="12" viewBox="0 0 13 12" style="position:absolute;left:4.3px;top:1.5px"><path d="M0.5 4.3H5V1.3L10 6L5 10.7V7.7H0.5z" fill="#f0f0f0"/><rect x="10.4" y="1" width="1.9" height="10" fill="#f0f0f0"/></svg></div>
<div class="b " style="left:19px;width:30px">分时</div>
<div class="b " style="left:48px;width:45px"><span style="position:absolute;left:6px;top:0;letter-spacing:-1px">5日</span><span class="dd" style="left:34px"></span></div>
<div class="b act" style="left:92px;width:19px">日</div>
<div class="b " style="left:110px;width:19px">周</div>
<div class="b " style="left:128px;width:19.5px">月</div>
<div class="b " style="left:146.5px;width:19.0px">季</div>
<div class="b " style="left:164.5px;width:19.0px">年</div>
<div class="b " style="left:182.5px;width:25.0px">1分</div>
<div class="b " style="left:206.5px;width:25.5px">5分</div>
<div class="b " style="left:231px;width:31.5px">15分</div>
<div class="b " style="left:261.5px;width:31.5px">30分</div>
<div class="b " style="left:292px;width:32px">60分</div>
<div class="b " style="left:323px;width:45px"><span style="position:absolute;left:7px;top:0;letter-spacing:-1px">30s</span><span class="dd" style="left:33px"></span></div>
<div class="b " style="left:367px;width:41px">多周期</div>
<div class="b " style="left:407px;width:29.5px">设置</div>
<div class="b " style="left:435.5px;width:402.0px"></div>
<div class="b " style="left:836.5px;width:18.5px">发<i class="tri"></i></div>
<div class="b " style="left:854px;width:18px"><span style="display:inline-block;transform:scaleX(.74);transform-origin:40% 50%;font-size:11px">PK</span><i class="tri"></i></div>
<div class="b " style="left:871px;width:18px">简<i class="tri"></i></div>
<div class="b " style="left:888px;width:29px">九转<i class="tri"></i></div>
<div class="b " style="left:916px;width:30px">连板<i class="tri"></i></div>
<div class="b " style="left:945px;width:29.5px">事件<i class="tri"></i></div>
<div class="b " style="left:973.5px;width:14.5px"><span class="dd" style="left:3px"></span></div>
<div class="b " style="left:987px;width:40px">加自选</div>
<div class="b " style="left:1026px;width:28px">均线</div>
<div class="b " style="left:1053px;width:29px">除权</div>
<div class="b " style="left:1081px;width:18px">叠</div>
<div class="b " style="left:1098px;width:18.5px">窗</div>
<div class="b " style="left:1115.5px;width:29.0px">预测</div>
<div class="b " style="left:1143.5px;width:29.0px">更多</div>
<div class="b " style="left:1171.5px;width:18.0px"><svg width="13" height="12" viewBox="0 0 13 12" style="position:absolute;left:2.2px;top:1.5px"><path d="M0.5 4.3H5V1.3L10 6L5 10.7V7.7H0.5z" fill="#f0f0f0"/><rect x="10.4" y="1" width="1.9" height="10" fill="#f0f0f0"/></svg></div>
<div class="b " style="left:1188.5px;width:14.0px"><span class="dd" style="left:3px"></span></div>
</div>
<div class="sb" style="left:1088px;width:55px">暗盘资金</div>
<div class="sb" style="left:1142px;width:61px">指标说明</div>
</body></html>
